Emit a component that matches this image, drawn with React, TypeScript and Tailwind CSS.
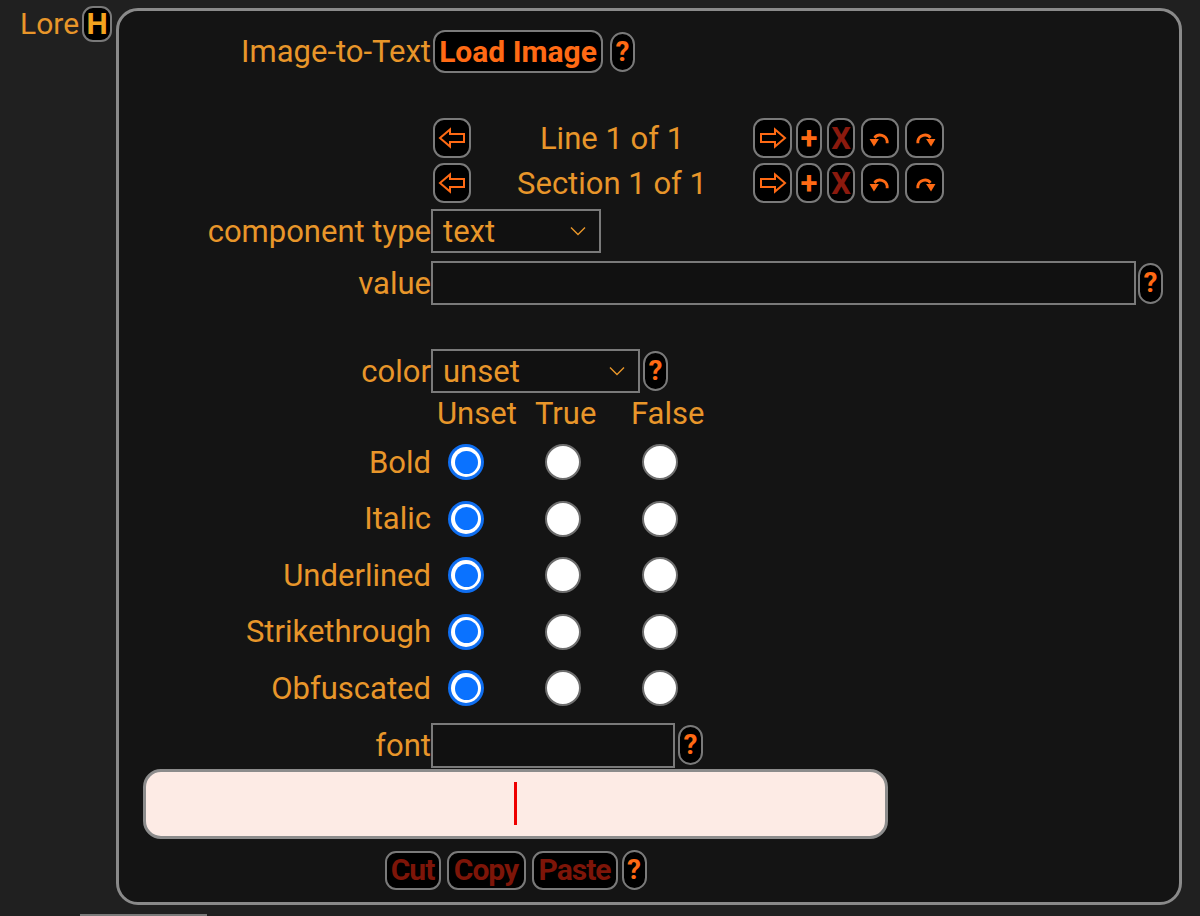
import type { ReactNode } from 'react';

const Btn = ({ children, className = '' }: { children: ReactNode; className?: string }) => (
    <div className={`flex items-center justify-center rounded-[11px] border-2 border-[#7a7a7a] bg-black ${className}`}>
        {children}
    </div>
);

const Help = ({ className = '' }: { className?: string }) => (
    <div className={`flex h-[40px] w-[25px] items-center justify-center rounded-full border-2 border-[#7a7a7a] bg-black text-[28px] font-bold text-[#ff6a14] ${className}`}>
        ?
    </div>
);

const ArrowIcon = ({ dir }: { dir: 'left' | 'right' }) => (
    <svg width="28" height="22" viewBox="0 0 28 22" className={dir === 'right' ? 'scale-x-[-1]' : ''}>
        <path d="M2 11 L12 2.5 V7 H26 V15 H12 V19.5 Z" fill="none" stroke="#ff6a14" strokeWidth="2" strokeLinejoin="miter" />
    </svg>
);

const TurnIcon = ({ dir }: { dir: 'undo' | 'redo' }) => (
    <svg width="22" height="20" viewBox="0 0 20 18" className={`mt-[4px] ${dir === 'redo' ? 'scale-x-[-1]' : ''}`}>
        <path d="M16.5 12 V10 A6.5 6.5 0 0 0 5 7" fill="none" stroke="#ff6a14" strokeWidth="2.6" />
        <path d="M0.5 8 L9 8 L4.5 15 Z" fill="#ff6a14" />
    </svg>
);

const Chevron = () => (
    <svg width="16" height="10" viewBox="0 0 16 10">
        <polyline points="1,1.5 8,8.5 15,1.5" fill="none" stroke="#e8962a" strokeWidth="1.4" />
    </svg>
);

const Radio = ({ on }: { on?: boolean }) =>
    on ? (
        <div className="flex h-[36px] w-[36px] items-center justify-center rounded-full bg-[#0f6ef0]">
            <div className="flex h-[30px] w-[30px] items-center justify-center rounded-full bg-white">
                <div className="h-[23px] w-[23px] rounded-full bg-[#0a72ff]" />
            </div>
        </div>
    ) : (
        <div className="h-[36px] w-[36px] rounded-full border-2 border-[#6e6e6e] bg-white" />
    );

const Label = ({ children }: { children: ReactNode }) => (
    <div className="w-[312px] shrink-0 whitespace-nowrap text-right">{children}</div>
);

const NavRow = ({ text, className = '' }: { text: string; className?: string }) => (
    <div className={`flex h-[40px] items-center ${className}`}>
        <div className="w-[314px] shrink-0" />
        <Btn className="h-[40px] w-[38px]">
            <ArrowIcon dir="left" />
        </Btn>
        <div className="w-[282px] text-center leading-none">{text}</div>
        <div className="flex items-center">
            <Btn className="h-[40px] w-[39px]">
                <ArrowIcon dir="right" />
            </Btn>
            <Btn className="ml-[4px] h-[40px] w-[26px] text-[31px] font-bold text-[#ff6a14]">+</Btn>
            <Btn className="ml-[5px] h-[40px] w-[28px] text-[31px] font-bold text-[#8b1a0e]">X</Btn>
            <Btn className="ml-[6px] h-[40px] w-[38px]">
                <TurnIcon dir="undo" />
            </Btn>
            <Btn className="ml-[6px] h-[40px] w-[39px]">
                <TurnIcon dir="redo" />
            </Btn>
        </div>
    </div>
);

const styles = ['Bold', 'Italic', 'Underlined', 'Strikethrough', 'Obfuscated'];

export default function App() {
    return (
        <div className="min-h-screen overflow-hidden bg-[#202020] font-['Roboto',sans-serif] text-[31px] leading-none text-[#e8962a]">
            <div className="flex items-start pl-[20px] pt-[6px]">
                <div className="flex h-[36px] w-[58px] items-center text-[30px]">Lore</div>
                <Btn className="ml-[4px] h-[36px] w-[30px] rounded-[10px] text-[30px] font-bold text-[#f5a41f]">H</Btn>

                {/* Panel */}
                <div className="ml-[4px] mt-[2px] w-[1066px] rounded-[22px] border-[3px] border-[#8a8a8a] bg-[#141414] pb-[12px]">
                    <div className="mt-[19px] flex h-[43px] items-center">
                        <Label>Image-to-Text</Label>
                        <Btn className="ml-[2px] h-[43px] w-[170px] rounded-[12px] text-[30px] font-bold text-[#ff6a14]">Load Image</Btn>
                        <Help className="ml-[7px] h-[39px] w-[23px]" />
                    </div>

                    <NavRow text="Line 1 of 1" className="mt-[45px]" />
                    <NavRow text="Section 1 of 1" className="mt-[5px]" />

                    <div className="mt-[6px] flex h-[44px] items-center">
                        <Label>component type</Label>
                        <div className="flex h-[44px] w-[170px] items-center justify-between border-2 border-[#7a7a7a] bg-[#111] pl-[10px] pr-[13px]">
                            <span>text</span>
                            <Chevron />
                        </div>
                    </div>

                    <div className="mt-[8px] flex h-[44px] items-center">
                        <Label>value</Label>
                        <div className="h-[44px] w-[705px] border-2 border-[#7a7a7a] bg-[#111]" />
                        <Help className="ml-[2px] h-[41px]" />
                    </div>

                    <div className="mt-[44px] flex h-[44px] items-center">
                        <Label>color</Label>
                        <div className="flex h-[44px] w-[209px] items-center justify-between border-2 border-[#7a7a7a] bg-[#111] pl-[10px] pr-[13px]">
                            <span>unset</span>
                            <Chevron />
                        </div>
                        <Help className="ml-[3px]" />
                    </div>

                    <div className="flex h-[41px] items-center">
                        <div className="w-[318px] shrink-0" />
                        <span className="w-[98px]">Unset</span>
                        <span className="w-[96px]">True</span>
                        <span>False</span>
                    </div>

                    {styles.map((s) => (
                        <div key={s} className="flex h-[56.5px] items-center">
                            <Label>{s}</Label>
                            <div className="ml-[17px]">
                                <Radio on />
                            </div>
                            <div className="ml-[61px]">
                                <Radio />
                            </div>
                            <div className="ml-[61px]">
                                <Radio />
                            </div>
                        </div>
                    ))}

                    <div className="mt-[6px] flex h-[45px] items-center">
                        <Label>font</Label>
                        <div className="h-[45px] w-[244px] border-2 border-[#7a7a7a] bg-[#111]" />
                        <Help className="ml-[3px]" />
                    </div>

                    <div className="ml-[24px] mt-[1px] w-[745px]">
                        <div className="flex h-[70px] items-center justify-center rounded-[18px] border-[3px] border-[#8c8c8c] bg-[#fdebe5]">
                            <div className="h-[43px] w-[3px] bg-[#ee0000]" />
                        </div>
                        <div className="mt-[12px] flex h-[39px] items-center justify-center text-[30px] font-bold text-[#7d1508]">
                            <Btn className="h-[39px] w-[56px] tracking-[-1px]">Cut</Btn>
                            <Btn className="ml-[6px] h-[39px] w-[79px] tracking-[-1px]">Copy</Btn>
                            <Btn className="ml-[6px] h-[39px] w-[86px] tracking-[-1px]">Paste</Btn>
                            <Help className="ml-[4px] h-[39px] w-[24px]" />
                        </div>
                    </div>
                </div>
            </div>

            {/* next row, mostly cut off */}
            <div className="ml-[80px] mt-[9px] flex items-start">
                <div className="h-[40px] w-[127px] border-2 border-[#7a7a7a] bg-[#111]" />
                <div className="ml-[8px] mt-[2px] h-[36px] w-[24px] rounded-full border-2 border-[#7a7a7a] bg-black" />
            </div>
        </div>
    );
}
